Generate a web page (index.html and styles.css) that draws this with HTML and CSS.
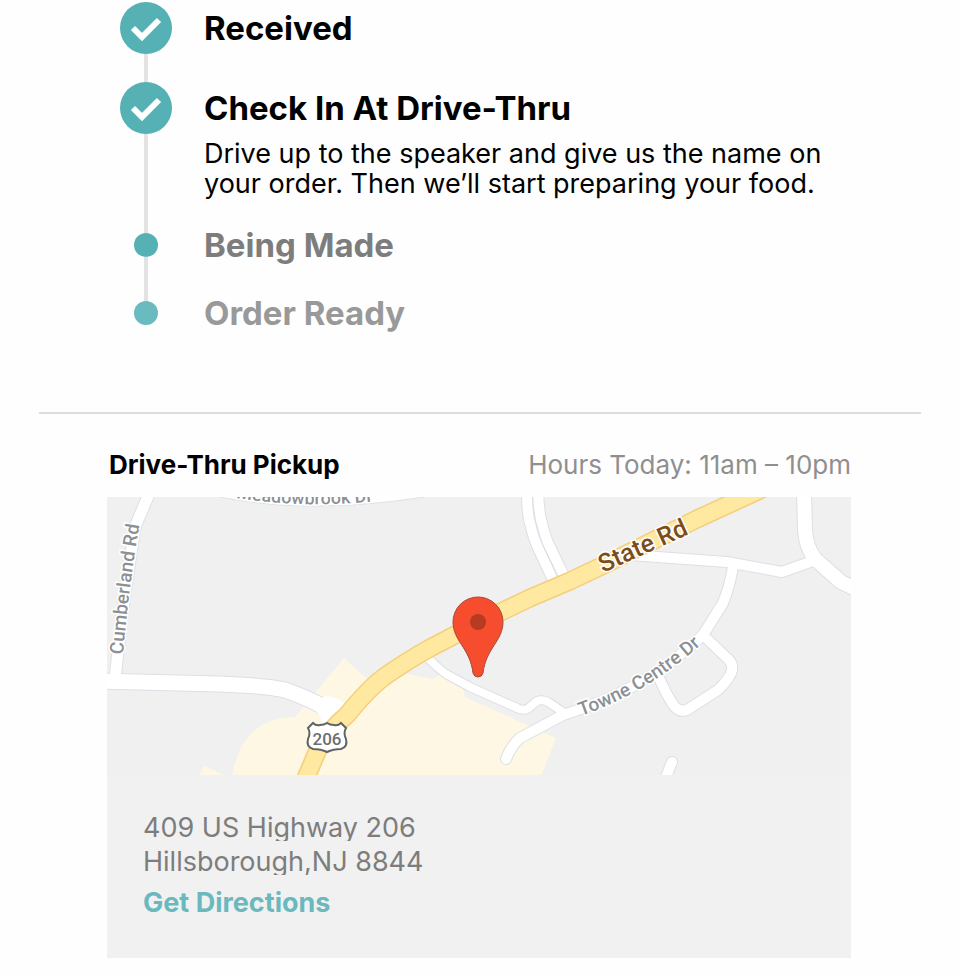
FILE: index.html
```html
<!DOCTYPE html>
<html lang="en">

<head>
    <meta charset="UTF-8">
    <meta name="viewport" content="width=device-width, initial-scale=1">
    <title>Order Status</title>
    <link rel="stylesheet" href="styles.css">
</head>

<body>
    <main class="order">
        <!-- Order progress -->
        <ol class="steps">
            <li class="step">
                <div class="track">
                    <svg class="check" viewBox="0 0 52 52" aria-hidden="true">
                        <circle cx="26" cy="26" r="26" />
                        <path d="M13 26 L22 35 L39 18" />
                    </svg>
                </div>
                <div class="step-text">
                    <h2>Received</h2>
                </div>
            </li>
            <li class="step">
                <div class="track">
                    <svg class="check" viewBox="0 0 52 52" aria-hidden="true">
                        <circle cx="26" cy="26" r="26" />
                        <path d="M13 26 L22 35 L39 18" />
                    </svg>
                </div>
                <div class="step-text">
                    <h2>Check In At Drive-Thru</h2>
                    <p>Drive up to the speaker and give us the name on your order. Then we’ll start preparing your food.</p>
                </div>
            </li>
            <li class="step next">
                <div class="track"><span class="dot"></span></div>
                <div class="step-text">
                    <h2>Being Made</h2>
                </div>
            </li>
            <li class="step next last">
                <div class="track"><span class="dot"></span></div>
                <div class="step-text">
                    <h2>Order Ready</h2>
                </div>
            </li>
        </ol>

        <!-- Pickup location -->
        <section class="pickup">
            <div class="pickup-header">
                <h3>Drive-Thru Pickup</h3>
                <p>Hours Today: 11am – 10pm</p>
            </div>
            <div class="card">
                <svg class="map" viewBox="107 497 744 278" role="img" aria-label="Map of the restaurant">
                    <defs>
                        <path id="meadowbrook" d="M236 498 Q 312 510 392 499" />
                        <path id="cumberland" d="M123 655 Q 129 585 140 522" />
                        <path id="state" d="M603 573 L 700 529" />
                        <path id="towne" d="M581 716 Q 650 692 706 640" />
                        <g id="roads">
                            <path class="w16" d="M100 681 L220 684 Q270 686 285 690 Q305 697 322 706 L337 711" />
                            <path class="w11" d="M149 494 L135 527 L124 600 L115 678" />
                            <path class="w16" d="M225 490 Q315 507 430 488" />
                            <path class="w10" d="M527 490 Q527 515 530 523 Q533 537 538 548 L553 580" />
                            <path class="w10" d="M538 490 Q539 515 542 523 Q545 537 550 547 L564 576" />
                            <path class="w8" d="M429 659 Q440 670 446 674 L470 687 L517 708 Q525 712 530 707 L537 701 Q543 699 548 702 L566 714" />
                            <path class="w10" d="M506 759 Q511 746 520 738 L563 715 L584 708 Q650 685 703 635 L723 603 Q730 585 733 567" />
                            <path class="w10" d="M703 635 L728 659 Q733 663 732 670 Q731 677 718 690 L690 708 Q682 714 675 707 Q668 698 660 680" />
                            <path class="w10" d="M630 555 L727 562 L782 572 L810 562" />
                            <path class="w14" d="M804 490 L805 530 Q806 547 815 559 L841 582 L858 590" />
                            <path class="w10" d="M672 762 L664 782" />
                        </g>
                        <path id="highway" d="M303 785 L317 752 Q330 728 347 715 Q368 689 384 677 Q405 662 430 648 L482 621 L530 598 L570 581 L610 562 L697 519 L760 490" />
                    </defs>
                    <rect class="land" x="107" y="497" width="744" height="278" />
                    <path class="area" d="M232 776 Q236 752 250 735 Q265 717 295 717 L344 658 L375 686 L403 673 L432 679 L440 675 L463 689 L465 697 L523 723 L556 738 L541 776 Z M199 776 L204 766 L227 776 Z" />
                    <use href="#roads" class="road-edge" />
                    <path class="junction" d="M310 706 Q320 712 323 724 L345 724 L345 704 Q336 696 325 696 Z" />
                    <use href="#roads" class="road" />
                    <use href="#highway" class="highway-edge" />
                    <use href="#highway" class="highway" />

                    <text class="street small"><textPath href="#meadowbrook">Meadowbrook Dr</textPath></text>
                    <text class="street"><textPath href="#cumberland">Cumberland Rd</textPath></text>
                    <text class="street"><textPath href="#towne">Towne Centre Dr</textPath></text>
                    <text class="street main-road"><textPath href="#state">State Rd</textPath></text>

                    <!-- US 206 shield -->
                    <path class="shield" d="M313 723 Q316 726 320 725 Q324 725 327 723 Q330 725 334 725 Q338 726 341 723 L346 728 Q343 733 346 739 Q348 747 341 749 Q333 749 327 752 Q321 749 313 749 Q306 747 308 739 Q311 733 308 728 Z" />
                    <text class="shield-text" x="327" y="745">206</text>

                    <path class="pin" d="M478 597 A25 25 0 0 1 503 622 C503 641 486 648 483 673 Q482 677 478 677 Q474 677 473 673 C470 648 453 641 453 622 A25 25 0 0 1 478 597 Z" />
                    <circle class="pin-dot" cx="478" cy="622" r="8" />
                </svg>
                <div class="details">
                    <address>
                        <span>409 US Highway 206</span>
                        <span>Hillsborough,NJ 8844</span>
                    </address>
                    <a href="#directions">Get Directions</a>
                </div>
            </div>
        </section>
    </main>
</body>

</html>
```

FILE: styles.css
```css
* {
    box-sizing: border-box;
}

body {
    margin: 0;
    background-color: #fefefe;
    color: #000;
    font-family: Inter, "Liberation Sans", sans-serif;
    font-size: 27px;
}

h2,
h3,
p {
    margin: 0;
}

.order {
    padding: 2px 39px 18px;
}

/* progress steps */
.steps {
    list-style: none;
    margin: 0;
    padding: 0 81px 87px;
}

.step {
    display: flex;
    gap: 32px;
}

.track {
    width: 52px;
    flex-shrink: 0;
    display: flex;
    flex-direction: column;
    align-items: center;
}

.step:not(.last) .track::after {
    content: "";
    flex: 1;
    width: 4px;
    background-color: #e3e3e3;
}

.check {
    width: 52px;
    height: 52px;
}

.check circle {
    fill: #56b1b5;
}

.check path {
    fill: none;
    stroke: #fff;
    stroke-width: 6;
}

.dot {
    width: 24px;
    height: 24px;
    border-radius: 50%;
    background-color: #56b1b5;
}

.last .dot {
    background-color: #69bbbf;
}

.step-text {
    padding-bottom: 28px;
}

.step-text h2 {
    font-size: 33px;
    line-height: 52px;
    font-weight: 700;
}

.step-text p {
    margin: 5px 0 6px;
    line-height: 30px;
}

.next h2 {
    line-height: 24px;
    color: #7d7d7d;
}

.next .step-text {
    padding-bottom: 44px;
}

.last h2 {
    color: #999;
}

.last .step-text {
    padding-bottom: 0;
}

/* pickup card */
.pickup {
    border-top: 2px solid #dcdcdc;
    padding: 35px 70px 0 68px;
}

.pickup-header {
    display: flex;
    justify-content: space-between;
    align-items: center;
    margin-bottom: 16px;
    padding-left: 2px;
    font-size: 26px;
    line-height: 32px;
}

.pickup-header h3 {
    font-size: 26px;
    font-weight: 700;
}

.pickup-header p {
    color: #8f8f8f;
}

.card {
    background-color: #f1f1f1;
}

.map {
    display: block;
    width: 100%;
}

.details {
    padding: 40px 36px 38px;
}

address {
    display: flex;
    flex-direction: column;
    gap: 8px;
    margin-bottom: 11px;
    font-style: normal;
    line-height: 26px;
    color: #7d7d7d;
}

address span {
    overflow: hidden;
}

.details a {
    display: block;
    line-height: 34px;
    font-weight: 700;
    color: #69b9be;
    text-decoration: none;
}

/* map drawing */
.land {
    fill: #f0f0f0;
}

.area {
    fill: #fef7e3;
}

.road,
.road-edge,
.highway,
.highway-edge {
    fill: none;
    stroke-linecap: round;
    stroke-linejoin: round;
}

.road {
    stroke: #fff;
}

.road-edge {
    stroke: #dddfe6;
}

.junction {
    fill: #fff;
}

.w8 { stroke-width: calc(8px + var(--edge, 0px)); }
.w10 { stroke-width: calc(10px + var(--edge, 0px)); }
.w11 { stroke-width: calc(11px + var(--edge, 0px)); }
.w14 { stroke-width: calc(14px + var(--edge, 0px)); }
.w16 { stroke-width: calc(15px + var(--edge, 0px)); }

.road-edge {
    --edge: 2px;
}

.highway-edge {
    stroke: #f3cf7c;
    stroke-width: 19px;
}

.highway {
    stroke: #ffe8a0;
    stroke-width: 16px;
}

.street {
    font-family: Roboto, sans-serif;
    font-size: 19px;
    font-weight: 500;
    fill: #8c9094;
    stroke: #fff;
    stroke-width: 3px;
    paint-order: stroke;
}

.small {
    font-size: 18px;
}

.main-road {
    font-size: 25px;
    fill: #7c4c1c;
}

.shield {
    fill: #fff;
    stroke: #606468;
    stroke-width: 2px;
}

.shield-text {
    font-family: Roboto, sans-serif;
    font-size: 17px;
    font-weight: 500;
    text-anchor: middle;
    fill: #6a6e72;
}

.pin {
    fill: #f54d2d;
    stroke: #a8483a;
    stroke-width: 1px;
}

.pin-dot {
    fill: #b83a20;
}
```
